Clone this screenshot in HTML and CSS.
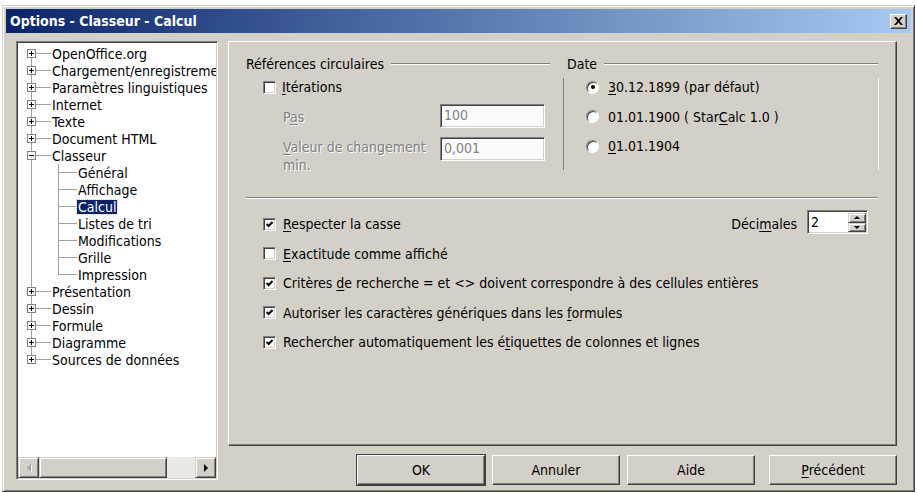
FILE: index.html
```html
<!DOCTYPE html>
<html lang="fr">
<head>
  <meta charset="UTF-8">
  <title>Options - Classeur - Calcul</title>
  <link rel="stylesheet" href="styles.css">
</head>
<body>

<div class="window">
  <div class="titlebar">
    <span class="title">Options - Classeur - Calcul</span>
    <span class="close">
      <svg width="9" height="8" viewBox="0 0 9 8"><path d="M0 0h2.2l2.3 2.6L6.8 0H9L5.6 4 9 8H6.8L4.5 5.4 2.2 8H0l3.4-4z" fill="#000"/></svg>
    </span>
  </div>

  <div class="content">
    <!-- arbre de navigation -->
    <div class="side">
      <div class="tree">
        <div class="row"><span class="cell first"><i class="box plus"></i></span><span class="stub"></span><span class="lbl">OpenOffice.org</span></div>
        <div class="row"><span class="cell mid"><i class="box plus"></i></span><span class="stub"></span><span class="lbl">Chargement/enregistrement</span></div>
        <div class="row"><span class="cell mid"><i class="box plus"></i></span><span class="stub"></span><span class="lbl">Paramètres linguistiques</span></div>
        <div class="row"><span class="cell mid"><i class="box plus"></i></span><span class="stub"></span><span class="lbl">Internet</span></div>
        <div class="row"><span class="cell mid"><i class="box plus"></i></span><span class="stub"></span><span class="lbl">Texte</span></div>
        <div class="row"><span class="cell mid"><i class="box plus"></i></span><span class="stub"></span><span class="lbl">Document HTML</span></div>
        <div class="row"><span class="cell mid"><i class="box"></i></span><span class="stub"></span><span class="lbl">Classeur</span></div>
        <div class="row"><span class="cell pass"></span><span class="cell mid"></span><span class="stub short"></span><span class="lbl">Général</span></div>
        <div class="row"><span class="cell pass"></span><span class="cell mid"></span><span class="stub short"></span><span class="lbl">Affichage</span></div>
        <div class="row"><span class="cell pass"></span><span class="cell mid"></span><span class="stub short"></span><span class="lbl sel">Calcul</span></div>
        <div class="row"><span class="cell pass"></span><span class="cell mid"></span><span class="stub short"></span><span class="lbl">Listes de tri</span></div>
        <div class="row"><span class="cell pass"></span><span class="cell mid"></span><span class="stub short"></span><span class="lbl">Modifications</span></div>
        <div class="row"><span class="cell pass"></span><span class="cell mid"></span><span class="stub short"></span><span class="lbl">Grille</span></div>
        <div class="row"><span class="cell pass"></span><span class="cell last"></span><span class="stub short"></span><span class="lbl">Impression</span></div>
        <div class="row"><span class="cell mid"><i class="box plus"></i></span><span class="stub"></span><span class="lbl">Présentation</span></div>
        <div class="row"><span class="cell mid"><i class="box plus"></i></span><span class="stub"></span><span class="lbl">Dessin</span></div>
        <div class="row"><span class="cell mid"><i class="box plus"></i></span><span class="stub"></span><span class="lbl">Formule</span></div>
        <div class="row"><span class="cell mid"><i class="box plus"></i></span><span class="stub"></span><span class="lbl">Diagramme</span></div>
        <div class="row"><span class="cell last"><i class="box plus"></i></span><span class="stub"></span><span class="lbl">Sources de données</span></div>
      </div>
      <div class="hscroll">
        <span class="sb"><i class="arr-l"></i></span>
        <span class="thumb"></span>
        <span class="track"></span>
        <span class="sb"><i class="arr-r"></i></span>
      </div>
    </div>

    <div class="main">
      <div class="page">
        <div class="groups">
          <div class="grp circ">
            <div class="grp-head"><span>Références circulaires</span></div>
            <div class="opt iter"><span class="chk"></span><span><u>I</u>térations</span></div>
            <div class="field">
              <span class="flabel pas dis">P<u>a</u>s</span>
              <span class="edit dis">100</span>
            </div>
            <div class="field">
              <span class="flabel dis"><u>V</u>aleur de changement min.</span>
              <span class="edit dis">0,001</span>
            </div>
          </div>

          <div class="grp date">
            <div class="grp-head"><span>Date</span></div>
            <div class="date-body">
              <div class="opt"><span class="radio on"></span><span><u>3</u>0.12.1899 (par défaut)</span></div>
              <div class="opt"><span class="radio"></span><span>01.01.1900 ( Star<u>C</u>alc 1.0 )</span></div>
              <div class="opt"><span class="radio"></span><span><u>0</u>1.01.1904</span></div>
            </div>
          </div>
        </div>

        <div class="sep"></div>

        <div class="opts">
          <div class="opt">
            <span class="chk on"><svg width="7" height="7" viewBox="0 0 7 7"><polyline points="0.6,3 2.6,5 6.6,1" fill="none" stroke="#000" stroke-width="2"/></svg></span>
            <span><u>R</u>especter la casse</span>
            <div class="dec">
              <span>Déci<u>m</u>ales</span>
              <span class="spin">
                <span class="spin-val">2</span>
                <span class="spin-btns">
                  <span class="spin-b"><i class="arr-u"></i></span>
                  <span class="spin-b"><i class="arr-d"></i></span>
                </span>
              </span>
            </div>
          </div>
          <div class="opt"><span class="chk"></span><span><u>E</u>xactitude comme affiché</span></div>
          <div class="opt">
            <span class="chk on"><svg width="7" height="7" viewBox="0 0 7 7"><polyline points="0.6,3 2.6,5 6.6,1" fill="none" stroke="#000" stroke-width="2"/></svg></span>
            <span>Critères <u>d</u>e recherche = et &lt;&gt; doivent correspondre à des cellules entières</span>
          </div>
          <div class="opt">
            <span class="chk on"><svg width="7" height="7" viewBox="0 0 7 7"><polyline points="0.6,3 2.6,5 6.6,1" fill="none" stroke="#000" stroke-width="2"/></svg></span>
            <span>Autoriser les caractères génériques dans les <u>f</u>ormules</span>
          </div>
          <div class="opt">
            <span class="chk on"><svg width="7" height="7" viewBox="0 0 7 7"><polyline points="0.6,3 2.6,5 6.6,1" fill="none" stroke="#000" stroke-width="2"/></svg></span>
            <span>Rechercher automatiquement les é<u>t</u>iquettes de colonnes et lignes</span>
          </div>
        </div>
      </div>

      <div class="buttons">
        <span class="btn def">OK</span>
        <span class="btn">Annuler</span>
        <span class="btn">Aide</span>
        <span class="btn prev"><span><u>P</u>récédent</span></span>
      </div>
    </div>
  </div>
</div>

</body>
</html>
```

FILE: styles.css
```css
body {
  margin: 0;
  background: #fff;
  font-family: "DejaVu Sans Condensed", "DejaVu Sans", sans-serif;
  font-stretch: condensed;
  font-size: 14px;
  color: #000;
}

u {
  text-underline-offset: 2px;
}

.window {
  margin: 5px 0 0 2px;
  width: 913px;
  height: 487px;
  box-sizing: border-box;
  padding: 3px;
  background: #d4d0c8;
  border: 1px solid;
  border-color: #d4d0c8 #404040 #404040 #d4d0c8;
  box-shadow: inset 1px 1px #fff, inset -1px -1px #808080;
}

/* barre de titre */
.titlebar {
  height: 24px;
  display: flex;
  align-items: center;
  justify-content: space-between;
  padding: 0 4px 0 4px;
  background: linear-gradient(to right, #0a246a, #a6caf0);
}

.title {
  color: #fff;
  font-weight: bold;
  font-size: 14px;
}

.close {
  width: 17px;
  height: 15px;
  box-sizing: border-box;
  display: flex;
  align-items: center;
  justify-content: center;
  background: #d4d0c8;
  border: 1px solid;
  border-color: #fff #404040 #404040 #fff;
  box-shadow: inset -1px -1px #808080;
}

.content {
  display: flex;
  gap: 10px;
  padding: 8px 0 0 10px;
}

/* arbre */
.side {
  width: 202px;
  height: 439px;
  box-sizing: border-box;
  padding: 1px;
  background: #fff;
  border: 1px solid;
  border-color: #808080 #fff #fff #808080;
  box-shadow: inset 1px 1px #404040, inset -1px -1px #d4d0c8;
  display: flex;
  flex-direction: column;
}

.tree {
  flex: 1;
  padding-top: 2px;
  overflow: hidden;
  white-space: nowrap;
}

.row {
  height: 17px;
  display: flex;
  align-items: center;
}

.cell {
  width: 27px;
  height: 17px;
  flex: none;
  display: flex;
  align-items: center;
  justify-content: center;
}

.cell.first {
  background:
    linear-gradient(#a0a0a0, #a0a0a0) 13px 8px / 1px 9px no-repeat,
    linear-gradient(#a0a0a0, #a0a0a0) 13px 8px / 14px 1px no-repeat;
}

.cell.mid {
  background:
    linear-gradient(#a0a0a0, #a0a0a0) 13px 0 / 1px 17px no-repeat,
    linear-gradient(#a0a0a0, #a0a0a0) 13px 8px / 14px 1px no-repeat;
}

.cell.last {
  background:
    linear-gradient(#a0a0a0, #a0a0a0) 13px 0 / 1px 9px no-repeat,
    linear-gradient(#a0a0a0, #a0a0a0) 13px 8px / 14px 1px no-repeat;
}

.cell.pass {
  background: linear-gradient(#a0a0a0, #a0a0a0) 13px 0 / 1px 17px no-repeat;
}

.stub {
  width: 6px;
  height: 17px;
  flex: none;
  background: linear-gradient(#a0a0a0, #a0a0a0) 0 8px / 100% 1px no-repeat;
}

.stub.short {
  width: 5px;
}

.box {
  width: 9px;
  height: 9px;
  box-sizing: border-box;
  border: 1px solid #808080;
  background:
    linear-gradient(#000, #000) 1px 3px / 5px 1px no-repeat,
    #fff;
}

.box.plus {
  background:
    linear-gradient(#000, #000) 1px 3px / 5px 1px no-repeat,
    linear-gradient(#000, #000) 3px 1px / 1px 5px no-repeat,
    #fff;
}

.lbl {
  line-height: 14px;
  padding: 0 1px;
}

.lbl.sel {
  background: #0a246a;
  color: #fff;
  outline: 1px dotted #d4d0c8;
}

/* barre de défilement */
.hscroll {
  height: 21px;
  display: flex;
}

.sb,
.thumb,
.spin-b {
  box-sizing: border-box;
  background: #d4d0c8;
  border: 1px solid;
  border-color: #d4d0c8 #404040 #404040 #d4d0c8;
  box-shadow: inset 1px 1px #fff, inset -1px -1px #808080;
}

.sb {
  width: 21px;
  display: flex;
  align-items: center;
  justify-content: center;
}

.thumb {
  width: 128px;
}

.track {
  flex: 1;
  background: #ebe9e4;
}

.arr-l {
  border-top: 4px solid transparent;
  border-bottom: 4px solid transparent;
  border-right: 4px solid #a0a0a0;
  filter: drop-shadow(1px 1px 0 #fff);
}

.arr-r {
  border-top: 4px solid transparent;
  border-bottom: 4px solid transparent;
  border-left: 4px solid #000;
  margin-left: 1px;
}

/* page d'options */
.main {
  width: 669px;
  display: flex;
  flex-direction: column;
}

.page {
  height: 405px;
  box-sizing: border-box;
  padding: 14px 18px 0 17px;
  border: 1px solid;
  border-color: #fff #404040 #404040 #fff;
  box-shadow: inset -1px -1px #808080;
}

.groups {
  display: flex;
  gap: 13px;
}

.grp.circ {
  width: 304px;
}

.grp.date {
  flex: 1;
}

.grp-head {
  height: 16px;
  display: flex;
  align-items: center;
  gap: 7px;
}

.grp-head::after {
  content: "";
  flex: 1;
  border-top: 1px solid #808080;
  border-bottom: 1px solid #fff;
}

.date .grp-head {
  padding-left: 4px;
}

.opt {
  height: 16px;
  display: flex;
  align-items: center;
  white-space: nowrap;
}

.iter {
  margin-top: 7px;
  padding-left: 17px;
  gap: 6px;
}

.field {
  display: flex;
  margin-top: 9px;
  padding-left: 37px;
}

.flabel {
  width: 157px;
  padding-top: 1px;
  line-height: 18px;
  padding-right: 12px;
  box-sizing: border-box;
}

.flabel.pas {
  padding-top: 4px;
}

.dis {
  color: #808080;
  text-shadow: 1px 1px 0 #fff;
}

.edit {
  width: 105px;
  height: 24px;
  box-sizing: border-box;
  padding-left: 3px;
  line-height: 20px;
  background: #fbfbfb;
  border: 1px solid;
  border-color: #808080 #fff #fff #808080;
  box-shadow: inset 1px 1px #404040, inset -1px -1px #d4d0c8;
}

.date-body {
  margin-top: 6px;
  height: 92px;
  box-sizing: border-box;
  border-left: 1px solid #808080;
  box-shadow: 1px 0 #fff;
  padding: 1px 0 0 22px;
  display: flex;
  flex-direction: column;
  gap: 13.5px;
}

.date-body .opt {
  gap: 9px;
}

.sep {
  margin-top: 23px;
  border-top: 1px solid #808080;
  border-bottom: 1px solid #fff;
}

.opts {
  margin-top: 17px;
  padding-left: 17px;
  display: flex;
  flex-direction: column;
  gap: 13.5px;
}

.opts .opt {
  gap: 7px;
}

.chk {
  width: 13px;
  height: 13px;
  flex: none;
  box-sizing: border-box;
  display: flex;
  align-items: center;
  justify-content: center;
  background: #fff;
  border: 1px solid;
  border-color: #808080 #fff #fff #808080;
  box-shadow: inset 1px 1px #404040, inset -1px -1px #d4d0c8;
}

.radio {
  width: 13px;
  height: 13px;
  flex: none;
  box-sizing: border-box;
  border-radius: 50%;
  display: flex;
  align-items: center;
  justify-content: center;
  background: #fff;
  border: 1px solid;
  border-color: #808080 #fff #fff #808080;
  box-shadow: inset 1px 1px #404040;
}

.radio.on::after {
  content: "";
  width: 4px;
  height: 4px;
  border-radius: 50%;
  background: #000;
}

/* décimales */
.dec {
  margin-left: auto;
  margin-right: 10px;
  display: flex;
  align-items: center;
  gap: 10px;
}

.spin {
  width: 61px;
  height: 24px;
  margin-bottom: 4px;
  box-sizing: border-box;
  display: flex;
  background: #fff;
  border: 1px solid;
  border-color: #808080 #fff #fff #808080;
  box-shadow: inset 1px 1px #404040, inset -1px -1px #d4d0c8;
  padding: 2px 1px 1px 2px;
}

.spin-val {
  flex: 1;
  line-height: 19px;
  padding-left: 1px;
}

.spin-btns {
  width: 18px;
  display: flex;
  flex-direction: column;
}

.spin-b {
  flex: 1;
  display: flex;
  align-items: center;
  justify-content: center;
}

.arr-u {
  border-left: 3px solid transparent;
  border-right: 3px solid transparent;
  border-bottom: 3px solid #000;
}

.arr-d {
  border-left: 3px solid transparent;
  border-right: 3px solid transparent;
  border-top: 3px solid #000;
}

/* boutons */
.buttons {
  display: flex;
  justify-content: flex-end;
  gap: 7px;
  margin-top: 9px;
}

.btn {
  width: 128px;
  height: 30px;
  box-sizing: border-box;
  display: flex;
  align-items: center;
  justify-content: center;
  background: #d4d0c8;
  border: 1px solid;
  border-color: #fff #404040 #404040 #fff;
  box-shadow: inset -1px -1px #808080;
}

.btn.def {
  outline: 1px solid #404040;
}

.btn.prev {
  margin-left: 7px;
}
```
